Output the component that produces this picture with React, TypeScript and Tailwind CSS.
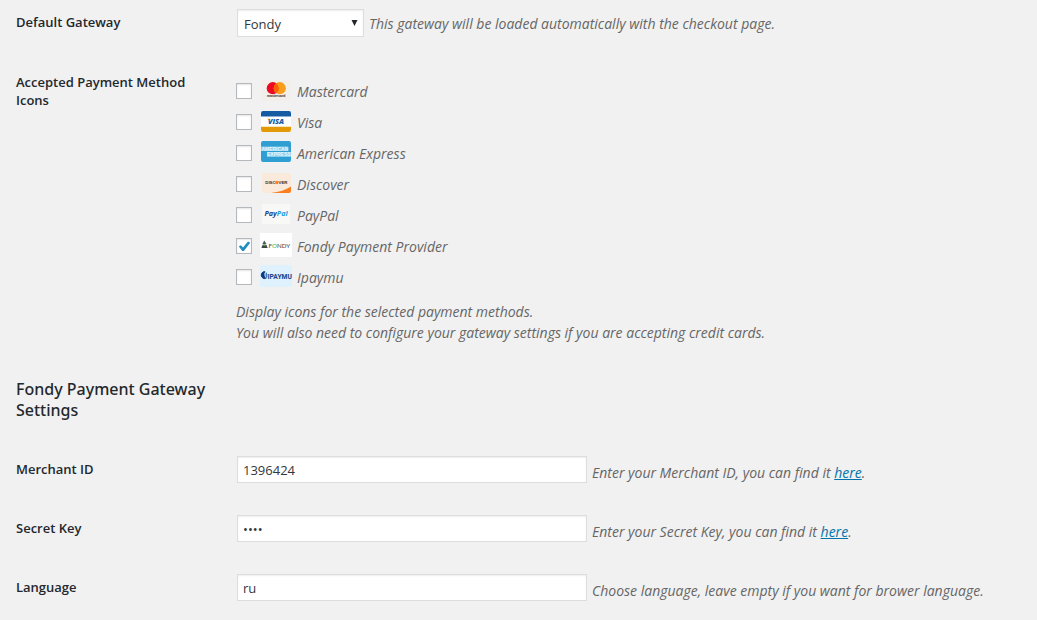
import { useState } from "react";
import type { ReactNode } from "react";

const logoClass = "h-6 w-8 shrink-0 overflow-visible";

function MastercardLogo() {
  return (
    <svg viewBox="0 0 32 24" className={logoClass} aria-hidden="true">
      <rect x="2" y="1" width="28" height="21" rx="1" fill="#f2efeb" />
      <circle cx="12.8" cy="9.2" r="6.1" fill="#eb0b22" />
      <circle cx="19.8" cy="9.2" r="6.1" fill="#f79f1a" />
      <path d="M16.3 4.2a6.1 6.1 0 0 1 0 10a6.1 6.1 0 0 1 0-10z" fill="#ff5f00" />
      <text x="16.2" y="18.2" textAnchor="middle" fontSize="3.4" className="font-['Liberation_Sans'] font-bold" fill="#2c2826">mastercard</text>
    </svg>
  );
}

function VisaLogo() {
  return (
    <svg viewBox="0 0 32 24" className={logoClass} aria-hidden="true">
      <rect x="1" y="1" width="30" height="21" rx="2" fill="#fff" />
      <path d="M1 6.4V3a2 2 0 0 1 2-2h26a2 2 0 0 1 2 2v3.4z" fill="#145ba4" />
      <path d="M1 16.7h30V20a2 2 0 0 1-2 2H3a2 2 0 0 1-2-2z" fill="#e49a06" />
      <text x="16" y="14.2" textAnchor="middle" fontSize="7.4" className="font-['Open_Sans'] font-extrabold italic" fill="#145ba4">VISA</text>
      <path d="M7 8.800h2l1 2.400z" fill="#e49a06" />
    </svg>
  );
}

function AmexLogo() {
  return (
    <svg viewBox="0 0 32 24" className={logoClass} aria-hidden="true">
      <rect x="1" y="0" width="30" height="21" rx="2" fill="#2f9fd3" />
      <path d="M1 5.500h27v4.500H1zM7 11h24v5H7z" fill="#8acdea" />
      <g className="font-['Liberation_Sans'] font-bold" fill="#e6f6fd">
        <text x="1.4" y="9.600" fontSize="5">AMERICAN</text>
        <text x="7" y="15.400" fontSize="5">EXPRESS</text>
      </g>
    </svg>
  );
}

function DiscoverLogo() {
  return (
    <svg viewBox="0 0 32 24" className={logoClass} aria-hidden="true">
      <rect x="2" y="1" width="29" height="20" rx="2" fill="#faeadb" />
      <path d="M11 21c8-.8 15-3 20-6.400V19a2 2 0 0 1-2 2z" fill="#fb7e20" />
      <g className="font-['Liberation_Sans'] font-bold" fontSize="4.300" fill="#33302e">
        <text x="5.300" y="12">DISC</text>
        <text x="18.600" y="12">VER</text>
      </g>
      <circle cx="16.900" cy="10.500" r="1.700" fill="#fb7e20" />
    </svg>
  );
}

function PayPalLogo() {
  return (
    <svg viewBox="0 0 32 24" className={logoClass} aria-hidden="true">
      <rect x="2" y="1" width="28" height="20" rx="1" fill="#f8f8f7" />
      <text x="4.400" y="13.200" fontSize="7.200" className="font-['Open_Sans'] font-bold italic" fill="#22408f">
        Pay<tspan fill="#1c9de0">Pal</tspan>
      </text>
    </svg>
  );
}

function FondyLogo() {
  return (
    <svg viewBox="0 0 32 24" className={logoClass} aria-hidden="true">
      <rect x="0" y="-1" width="32" height="24" fill="#fff" />
      <path d="M4.300 6.400 6.500 10H2.300z" fill="#55585a" />
      <path d="M1.400 13.900 2.600 10.800h3.800l1.300 3.100z" fill="#3f4547" />
      <path d="M3.400 10.300h2.200v1.500H3.400z" fill="#62b45a" />
      <text x="8.600" y="13.500" fontSize="6.200" className="font-['Lato'] font-medium" fill="#4b4f52">
        F<tspan fill="#5cb84e">O</tspan>NDY
      </text>
    </svg>
  );
}

function IpaymuLogo() {
  return (
    <svg viewBox="0 0 32 24" className={logoClass} aria-hidden="true">
      <rect x="0" y="0" width="32" height="22" fill="#dff1fd" />
      <path d="M4.800 6.600a3.400 3.500 0 1 0 1 6.800 5 5 0 0 1-1-6.800z" fill="#12377d" stroke="#12377d" strokeWidth="1" />
      <path d="M6 7c1.600 1.200 1.900 4.500.6 6.400-1.200-1.600-1.500-4.300-.6-6.400z" fill="#2f7fc4" />
      <text x="7.600" y="14" fontSize="6.700" className="font-['Roboto'] font-extrabold" fill="#1b4a8f">IPAYMU</text>
    </svg>
  );
}

const methods = [
  { id: "mastercard", label: "Mastercard", Logo: MastercardLogo },
  { id: "visa", label: "Visa", Logo: VisaLogo },
  { id: "amex", label: "American Express", Logo: AmexLogo },
  { id: "discover", label: "Discover", Logo: DiscoverLogo },
  { id: "paypal", label: "PayPal", Logo: PayPalLogo },
  { id: "fondy", label: "Fondy Payment Provider", Logo: FondyLogo },
  { id: "ipaymu", label: "Ipaymu", Logo: IpaymuLogo },
];

const rowClass = "grid grid-cols-[200px_minmax(0,1fr)] gap-x-5";
const labelClass = "text-[13px] leading-[18px] font-semibold text-[#23282d]";
const noteClass = "text-sm leading-[21px] italic";
const controlShadow = "border border-[#ddd] bg-white shadow-[inset_0_1px_2px_rgba(0,0,0,0.07)]";

function Here() {
  return <a href="#account" className="text-[#0073aa] underline">here</a>;
}

function TextRow({ id, label, type = "text", value, children }: {
  id: string;
  label: string;
  type?: string;
  value: string;
  children: ReactNode;
}) {
  return (
    <div className={rowClass}>
      <label htmlFor={id} className={`${labelClass} pt-1`}>{label}</label>
      <div className="flex items-start gap-[5px] pl-px">
        <input
          id={id}
          type={type}
          defaultValue={value}
          className={`h-[27px] w-[350px] min-w-0 px-[5px] text-[13px] text-[#32373c] ${controlShadow}`}
        />
        <p className={`pt-[6px] ${noteClass}`}>{children}</p>
      </div>
    </div>
  );
}

export default function App() {
  const [selected, setSelected] = useState<string[]>(["fondy"]);
  const toggle = (id: string) =>
    setSelected((s) => (s.includes(id) ? s.filter((x) => x !== id) : [...s, id]));

  return (
    <main className="min-h-screen bg-[#f1f1f1] px-4 pt-[9px] pb-[19px] font-['Open_Sans','Noto_Sans',sans-serif] text-[13px] leading-[21px] text-[#666]">
      <div className={rowClass}>
        <label htmlFor="gateway" className={`${labelClass} pt-1`}>Default Gateway</label>
        <div className="flex items-start gap-[5px] pl-px">
          <div className="relative">
            <select
              id="gateway"
              defaultValue="Fondy"
              className={`h-7 w-[127px] appearance-none px-[6px] pt-[2px] text-[13px] text-[#32373c] ${controlShadow}`}
            >
              <option>Fondy</option>
            </select>
            <svg viewBox="0 0 7 6" className="pointer-events-none absolute top-[11px] right-[6px] h-[6px] w-[7px]" aria-hidden="true">
              <path d="M.5 0h6L3.500 6z" fill="#23282d" />
            </svg>
          </div>
          <p className={`pt-1 ${noteClass}`}>This gateway will be loaded automatically with the checkout page.</p>
        </div>
      </div>

      <fieldset className={`${rowClass} mt-9`} aria-labelledby="icons-label">
        <div id="icons-label" className={labelClass}>Accepted Payment Method Icons</div>
        <div className="pt-[6px]">
          <div className="flex flex-col items-start gap-[7px]">
            {methods.map(({ id, label, Logo }) => (
              <label key={id} className="flex h-6 items-center">
                <span className="relative mr-2 size-4">
                  <input
                    type="checkbox"
                    checked={selected.includes(id)}
                    onChange={() => toggle(id)}
                    className="peer block size-4 appearance-none border border-[#b4b9be] bg-white shadow-[inset_0_1px_2px_rgba(0,0,0,0.1)]"
                  />
                  <svg viewBox="0 0 16 16" className="pointer-events-none absolute inset-0 hidden size-4 peer-checked:block" aria-hidden="true">
                    <path d="M2.800 8.500 4.800 7.200l2.200 2.300 5-6 2.200 1.200-6.300 8.200H6.300z" fill="#1e8cbe" />
                  </svg>
                </span>
                <Logo />
                <span className={`ml-[5px] ${noteClass}`}>{label}</span>
              </label>
            ))}
          </div>
          <p className={`mt-3 ${noteClass}`}>
            Display icons for the selected payment methods.
            <br />
            You will also need to configure your gateway settings if you are accepting credit cards.
          </p>
        </div>
      </fieldset>

      <h2 className="mt-9 w-[200px] font-['Noto_Sans',sans-serif] text-base leading-[21px] font-medium text-[#23282d]">Fondy Payment Gateway Settings</h2>

      <div className="mt-[35px] flex flex-col gap-8">
        <TextRow id="merchant" label="Merchant ID" value="1396424">
          Enter your Merchant ID, you can find it <Here />.
        </TextRow>
        <TextRow id="secret" label="Secret Key" type="password" value="test">
          Enter your Secret Key, you can find it <Here />.
        </TextRow>
        <TextRow id="language" label="Language" value="ru">
          Choose language, leave empty if you want for brower language.
        </TextRow>
      </div>
    </main>
  );
}
